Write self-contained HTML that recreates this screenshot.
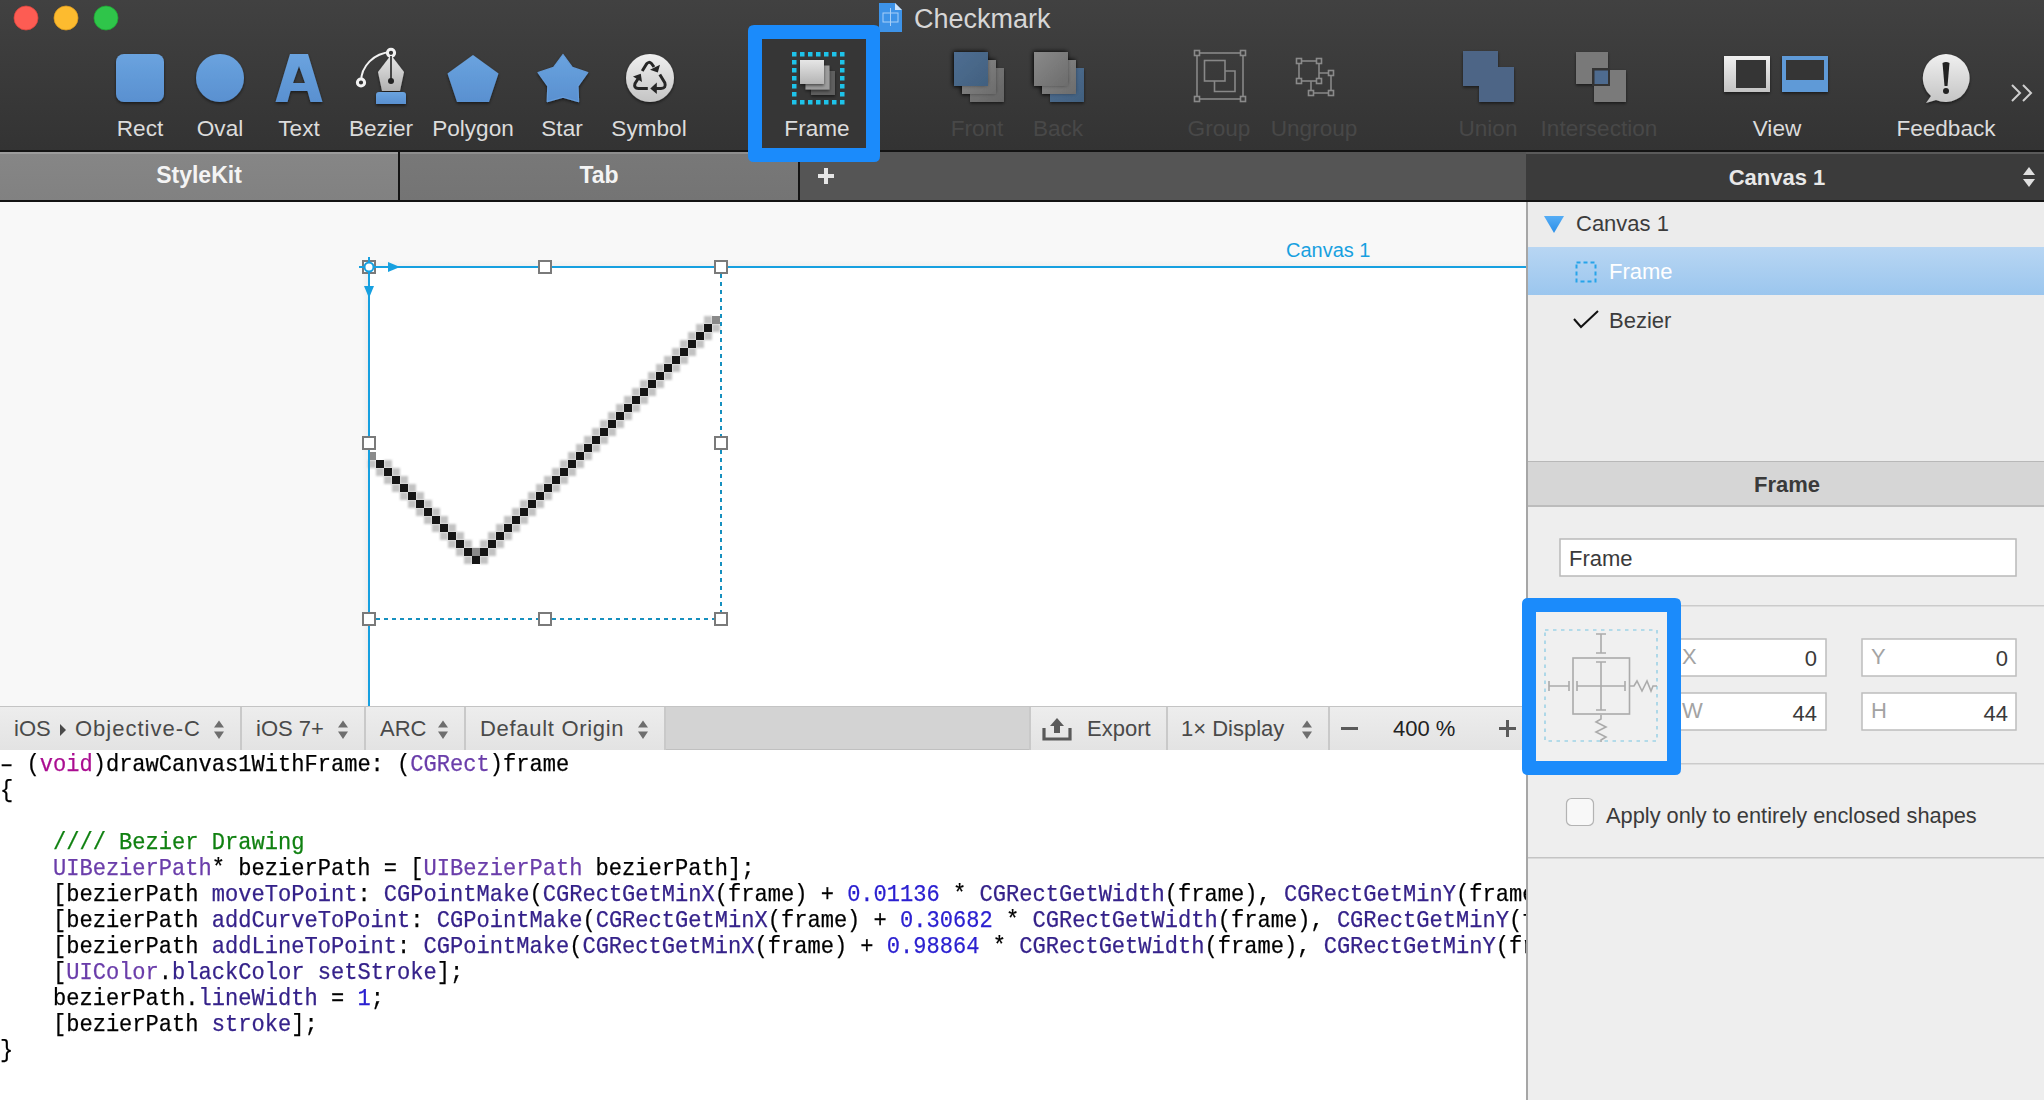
<!DOCTYPE html>
<html><head><meta charset="utf-8">
<style>
*{margin:0;padding:0;box-sizing:border-box}
html,body{width:2044px;height:1100px;overflow:hidden;background:#ececec;font-family:"Liberation Sans",sans-serif}
.a{position:absolute}
#toolbar{left:0;top:0;width:2044px;height:150px;background:linear-gradient(#414141,#333333)}
#sep1{left:0;top:150px;width:2044px;height:2px;background:#141414}
.lbl{position:absolute;top:115px;height:28px;font-size:22.6px;color:#dcdcdc;white-space:nowrap;text-align:center;line-height:28px}
.dis{color:#484848}
#tabs{left:0;top:152px;width:1526px;height:48px;background:#555}
#sep2{left:0;top:200px;width:2044px;height:2px;background:#141414}
.tab{position:absolute;top:0;height:48px;line-height:46px;text-align:center;color:#f4f4f4;font-weight:bold;font-size:23px}
#canvasArea{left:0;top:202px;width:1526px;height:504px;background:#f8f8f8;overflow:hidden}
#bottombar{left:0;top:706px;width:1526px;height:44px;background:#d3d3d3;border-top:1px solid #c4c4c4;border-bottom:1px solid #c0c0c0}
.seg{position:absolute;top:0;height:43px;background:linear-gradient(#ededed,#e3e3e3);border-right:2px solid #c9c9c9;color:#4a4a4a;font-size:22px;line-height:43px;white-space:nowrap}
#code{left:0;top:750px;width:1526px;height:350px;background:#fff;overflow:hidden}
.cl{position:absolute;left:0;height:26px;font-family:"Liberation Mono",monospace;font-size:24px;line-height:26px;white-space:pre;color:#000;transform-origin:0 0;transform:scaleX(0.919);-webkit-text-stroke:0.25px currentColor}
.kw{color:#aa0d91}.cls{color:#6a3daa}.mt{color:#35228a}.num{color:#2a1fd0}.cm{color:#0f8010}
#panel{left:1526px;top:202px;width:518px;height:898px;background:#eeeeee;border-left:2px solid #a6a6a6}
#phead{left:1526px;top:152px;width:518px;height:48px;background:#3b3b3b}
</style></head><body>

<div id="toolbar" class="a">
<svg class="a" style="left:0;top:0" width="2044" height="150">
<defs>
<linearGradient id="gb" x1="0" y1="0" x2="0" y2="1"><stop offset="0" stop-color="#6aa3df"/><stop offset="1" stop-color="#5990d0"/></linearGradient>
<linearGradient id="gw" x1="0" y1="0" x2="0" y2="1"><stop offset="0" stop-color="#f0f0f0"/><stop offset="1" stop-color="#c4c4c4"/></linearGradient>
<linearGradient id="gnib" x1="0" y1="0" x2="0" y2="1"><stop offset="0" stop-color="#e8e8e8"/><stop offset="1" stop-color="#b0b0b0"/></linearGradient>
<linearGradient id="gsq" x1="0" y1="0" x2="0" y2="1"><stop offset="0" stop-color="#e6e6e6"/><stop offset="1" stop-color="#b4b4b4"/></linearGradient>
<linearGradient id="gg" x1="0" y1="0" x2="1" y2="1"><stop offset="0" stop-color="#8a8a8a"/><stop offset="1" stop-color="#6c6c6c"/></linearGradient><linearGradient id="gg2" x1="0" y1="0" x2="1" y2="1"><stop offset="0" stop-color="#7e7e7e"/><stop offset="1" stop-color="#646464"/></linearGradient><linearGradient id="gbl" x1="0" y1="0" x2="1" y2="1"><stop offset="0" stop-color="#4f6e92"/><stop offset="1" stop-color="#41607f"/></linearGradient><filter id="sh2" x="-30%" y="-30%" width="160%" height="160%"><feDropShadow dx="-1" dy="-1" stdDeviation="2" flood-color="#000" flood-opacity="0.6"/></filter><filter id="sh" x="-20%" y="-20%" width="140%" height="150%"><feDropShadow dx="0" dy="1.5" stdDeviation="1.5" flood-color="#000" flood-opacity="0.55"/></filter>
</defs>
<!-- traffic lights -->
<circle cx="26" cy="18" r="12" fill="#fd5c53" stroke="#d9453d" stroke-width="0.8"/>
<circle cx="66" cy="18" r="12" fill="#fdbb2f" stroke="#dc9a20" stroke-width="0.8"/>
<circle cx="106" cy="18" r="12" fill="#2fc54a" stroke="#1fa634" stroke-width="0.8"/>
<!-- doc icon -->
<path d="M879,3 L895,3 L902,10 L902,32 L879,32 Z" fill="#3d93e8"/>
<path d="M895,3 L902,10 L895,10 Z" fill="#cfe4fa"/>
<rect x="883" y="13" width="15" height="9" fill="none" stroke="#a9d0f7" stroke-width="1"/>
<line x1="890.5" y1="8" x2="890.5" y2="26" stroke="#a9d0f7" stroke-width="1"/>
<!-- rect -->
<rect x="116" y="54" width="48" height="48" rx="8" fill="url(#gb)" filter="url(#sh)"/>
<!-- oval -->
<circle cx="220" cy="78" r="24" fill="url(#gb)" filter="url(#sh)"/>
<!-- A -->
<path fill-rule="evenodd" fill="url(#gb)" filter="url(#sh)" d="M290,54 L308,54 L322.5,102 L310.5,102 L307.5,91 L290.5,91 L287.5,102 L275.5,102 Z M299,66 L293,83 L305,83 Z"/>
<!-- bezier -->
<path d="M361,82 C361,66 374,53 391,52" fill="none" stroke="#f2f2f2" stroke-width="2"/>
<circle cx="361" cy="82.5" r="3.6" fill="#333" stroke="#f2f2f2" stroke-width="3"/>
<path d="M391,55 L404,72 L400,91 L382,91 L378,72 Z" fill="url(#gnib)" filter="url(#sh)"/>
<circle cx="391" cy="52.8" r="3.6" fill="#333" stroke="#f2f2f2" stroke-width="3"/>
<line x1="391" y1="56" x2="391" y2="80" stroke="#222" stroke-width="1.6"/>
<circle cx="391" cy="81" r="3" fill="#222"/>
<path d="M376,104 L376,95 Q376,92 379,92 L403,92 Q406,92 406,95 L406,104 Z" fill="url(#gb)" filter="url(#sh)"/>
<!-- polygon -->
<path d="M473,55 L498.5,73.5 L489,102 L457,102 L447.5,73.5 Z" fill="url(#gb)" filter="url(#sh)"/>
<!-- star -->
<path id="star" d="M563,54.5 L572.3,67.4 L587.8,72.5 L578,86.2 L578.6,101.7 L563,97.1 L547.2,101.7 L547.8,86.2 L538,72.5 L553.6,67.4 Z" fill="url(#gb)" stroke="#669ddb" stroke-width="1.2" stroke-linejoin="round" filter="url(#sh)"/>
<!-- symbol -->
<circle cx="650" cy="78" r="24" fill="url(#gw)" filter="url(#sh)"/>
<g fill="none" stroke="#262626" stroke-width="3" stroke-linejoin="round">
<path d="M642.2,71 L646.5,64 Q648.8,61 651.5,63.5 L654,67"/>
<path d="M638.2,78.5 L635,83.5 Q633.5,88.2 638.5,88.4 L647.8,88.4"/>
<path d="M659.8,74.5 L664.8,82.8 Q666.5,88.4 661,88.4 L654,88.4"/>
</g>
<g fill="#262626">
<path d="M650,69.8 L660,64.8 L657.8,72.5 Z"/>
<path d="M633,76.4 L640.8,73.8 L642,82 Z"/>
<path d="M650.3,88.4 L656.8,82.6 L656.8,94 Z"/>
</g>
<!-- frame highlight box -->

<rect x="762" y="39" width="104" height="109" fill="#363636"/>
<g id="framedots" fill="#1ec3e9"><rect x="792" y="52" width="4.5" height="4.5"/><rect x="792" y="100" width="4.5" height="4.5"/><rect x="800" y="52" width="4.5" height="4.5"/><rect x="800" y="100" width="4.5" height="4.5"/><rect x="808" y="52" width="4.5" height="4.5"/><rect x="808" y="100" width="4.5" height="4.5"/><rect x="816" y="52" width="4.5" height="4.5"/><rect x="816" y="100" width="4.5" height="4.5"/><rect x="824" y="52" width="4.5" height="4.5"/><rect x="824" y="100" width="4.5" height="4.5"/><rect x="832" y="52" width="4.5" height="4.5"/><rect x="832" y="100" width="4.5" height="4.5"/><rect x="840" y="52" width="4.5" height="4.5"/><rect x="840" y="100" width="4.5" height="4.5"/><rect x="792" y="60" width="4.5" height="4.5"/><rect x="840" y="60" width="4.5" height="4.5"/><rect x="792" y="68" width="4.5" height="4.5"/><rect x="840" y="68" width="4.5" height="4.5"/><rect x="792" y="76" width="4.5" height="4.5"/><rect x="840" y="76" width="4.5" height="4.5"/><rect x="792" y="84" width="4.5" height="4.5"/><rect x="840" y="84" width="4.5" height="4.5"/><rect x="792" y="92" width="4.5" height="4.5"/><rect x="840" y="92" width="4.5" height="4.5"/></g>
<rect x="811" y="71" width="24" height="24" fill="#5e5e5e" filter="url(#sh)"/>
<rect x="805.5" y="65.5" width="24" height="24" fill="#9c9c9c" filter="url(#sh)"/>
<rect x="800" y="60" width="24" height="24" fill="url(#gsq)" filter="url(#sh)"/>
<!-- front -->
<g filter="url(#sh)">
<rect x="970" y="68" width="34" height="34" fill="url(#gg2)"/>
<rect x="962" y="60" width="34" height="34" fill="url(#gg)" filter="url(#sh2)"/>
<rect x="954" y="52" width="34" height="34" fill="url(#gbl)" filter="url(#sh2)"/>
</g>
<!-- back -->
<g filter="url(#sh)">
<rect x="1050" y="68" width="34" height="34" fill="url(#gbl)"/>
<rect x="1042" y="60" width="34" height="34" fill="url(#gg)" filter="url(#sh2)"/>
<rect x="1034" y="52" width="34" height="34" fill="url(#gg)" filter="url(#sh2)"/>
</g>
<!-- group -->
<g fill="none" stroke="#888" stroke-width="1.6">
<rect x="1197" y="53" width="46" height="46"/>
<rect x="1204.5" y="60.5" width="20.5" height="20.5"/>
<path d="M1225,71 L1235,71 L1235,91.5 L1214.5,91.5 L1214.5,81"/>
</g>
<rect x="1194.5" y="50.5" width="5" height="5" fill="#3a3a3a" stroke="#8a8a8a" stroke-width="1.6"/><rect x="1240.5" y="50.5" width="5" height="5" fill="#3a3a3a" stroke="#8a8a8a" stroke-width="1.6"/><rect x="1194.5" y="96.5" width="5" height="5" fill="#3a3a3a" stroke="#8a8a8a" stroke-width="1.6"/><rect x="1240.5" y="96.5" width="5" height="5" fill="#3a3a3a" stroke="#8a8a8a" stroke-width="1.6"/>
<!-- ungroup -->
<g fill="none" stroke="#888" stroke-width="1.6">
<rect x="1299" y="61" width="20" height="20"/>
<path d="M1319,73 L1331,73 L1331,93 L1311,93 L1311,81"/>
</g>
<rect x="1296.5" y="58.5" width="5" height="5" fill="#3a3a3a" stroke="#8a8a8a" stroke-width="1.6"/><rect x="1316.5" y="58.5" width="5" height="5" fill="#3a3a3a" stroke="#8a8a8a" stroke-width="1.6"/><rect x="1296.5" y="78.5" width="5" height="5" fill="#3a3a3a" stroke="#8a8a8a" stroke-width="1.6"/><rect x="1316.5" y="78.5" width="5" height="5" fill="#3a3a3a" stroke="#8a8a8a" stroke-width="1.6"/><rect x="1328.5" y="70.5" width="5" height="5" fill="#3a3a3a" stroke="#8a8a8a" stroke-width="1.6"/><rect x="1308.5" y="90.5" width="5" height="5" fill="#3a3a3a" stroke="#8a8a8a" stroke-width="1.6"/><rect x="1328.5" y="90.5" width="5" height="5" fill="#3a3a3a" stroke="#8a8a8a" stroke-width="1.6"/>
<!-- union -->
<path d="M1463,51 L1498,51 L1498,67 L1514,67 L1514,102 L1479,102 L1479,86 L1463,86 Z" fill="#4d6586" filter="url(#sh)"/>
<!-- intersection -->
<g filter="url(#sh)">
<rect x="1576" y="52" width="32" height="32" fill="#797979"/>
<rect x="1594" y="70" width="32" height="32" fill="#7a7a7a"/>
</g>
<rect x="1592" y="68" width="18" height="18" fill="#333"/>
<rect x="1594.5" y="70.5" width="13.5" height="13.5" fill="#4e6b8f"/>
<!-- view -->
<path fill-rule="evenodd" fill="url(#gw)" filter="url(#sh)" d="M1724,56 L1770,56 L1770,92 L1724,92 Z M1736,60 L1736,88 L1766,88 L1766,60 Z"/>
<rect x="1736" y="60" width="30" height="28" fill="#353535"/>
<path fill-rule="evenodd" fill="#5e9ad7" filter="url(#sh)" d="M1782,56 L1828,56 L1828,92 L1782,92 Z M1786,60 L1786,80 L1824,80 L1824,60 Z"/>
<rect x="1786" y="60" width="38" height="20" fill="#353535"/>
<!-- feedback -->
<path d="M1946,54 A24,24 0 1 1 1936,100 L1926,103 L1931,96 A24,24 0 0 1 1946,54 Z" fill="url(#gw)" filter="url(#sh)"/>
<path d="M1942.5,63 Q1946,61 1949.5,63 L1947.5,86 L1944.5,86 Z" fill="#222"/>
<circle cx="1946" cy="91" r="3" fill="#222"/>
<!-- chevrons -->
<path d="M2012,85 L2020,93 L2012,101 M2023,85 L2031,93 L2023,101" fill="none" stroke="#cfcfcf" stroke-width="2"/>
</svg>
<div class="lbl" style="left:90px;width:100px">Rect</div>
<div class="lbl" style="left:170px;width:100px">Oval</div>
<div class="lbl" style="left:249px;width:100px">Text</div>
<div class="lbl" style="left:331px;width:100px">Bezier</div>
<div class="lbl" style="left:413px;width:120px">Polygon</div>
<div class="lbl" style="left:512px;width:100px">Star</div>
<div class="lbl" style="left:599px;width:100px">Symbol</div>
<div class="lbl" style="left:767px;width:100px">Frame</div>
<div class="lbl dis" style="left:927px;width:100px">Front</div>
<div class="lbl dis" style="left:1008px;width:100px">Back</div>
<div class="lbl dis" style="left:1169px;width:100px">Group</div>
<div class="lbl dis" style="left:1254px;width:120px">Ungroup</div>
<div class="lbl dis" style="left:1438px;width:100px">Union</div>
<div class="lbl dis" style="left:1519px;width:160px">Intersection</div>
<div class="lbl" style="left:1727px;width:100px">View</div>
<div class="lbl" style="left:1886px;width:120px">Feedback</div>
<div class="a" style="left:914px;top:2px;font-size:27px;line-height:34px;color:#d6d6d6">Checkmark</div>
</div>

<div id="sep1" class="a"></div>
<div id="tabs" class="a">
<div class="tab" style="left:0;width:398px;background:linear-gradient(#9c9c9c 0,#9c9c9c 1.5px,#868686 2.5px,#818181)">StyleKit</div>
<div class="a" style="left:398px;top:0;width:2px;height:48px;background:#141414"></div>
<div class="tab" style="left:400px;width:398px;background:linear-gradient(#8e8e8e 0,#8e8e8e 1.5px,#787878 2.5px,#747474)">Tab</div>
<div class="a" style="left:798px;top:0;width:2px;height:48px;background:#141414"></div>
<div class="a" style="left:818px;top:22px;width:16px;height:4px;background:#e6e6e6"></div>
<div class="a" style="left:824px;top:16px;width:4px;height:16px;background:#e6e6e6"></div>
</div>
<div id="sep2" class="a"></div>
<div id="phead" class="a">
<div class="a" style="left:0;top:0;width:518px;height:2px;background:#5a5a5a"></div>
<div class="a" style="left:-8px;top:1px;width:518px;height:48px;line-height:50px;text-align:center;color:#e8e8e8;font-weight:bold;font-size:22px">Canvas 1</div>
<svg class="a" style="left:495px;top:14px" width="16" height="22"><path d="M8,1 L14,9 L2,9 Z M8,21 L14,13 L2,13 Z" fill="#e0e0e0"/></svg>
</div>
<div id="canvasArea" class="a">
<svg class="a" style="left:0;top:-202px" width="1526" height="908">
<defs><linearGradient id="shl" x1="0" y1="0" x2="1" y2="0"><stop offset="0" stop-color="#f8f8f8"/><stop offset="1" stop-color="#ededed"/></linearGradient>
<linearGradient id="sht" x1="0" y1="0" x2="0" y2="1"><stop offset="0" stop-color="#f8f8f8"/><stop offset="1" stop-color="#f0f0f0"/></linearGradient></defs>
<rect x="362" y="267" width="7" height="440" fill="url(#shl)"/>
<rect x="369" y="260" width="1160" height="7" fill="url(#sht)"/>
<rect x="369" y="267" width="1160" height="440" fill="#fff"/>
<filter id="blr" x="-5%" y="-5%" width="110%" height="110%"><feGaussianBlur stdDeviation="1.3"/></filter><g fill="#c2c2c2" filter="url(#blr)"><rect x="368" y="460" width="8" height="8"/><rect x="384" y="460" width="8" height="8"/><rect x="376" y="468" width="8" height="8"/><rect x="392" y="468" width="8" height="8"/><rect x="384" y="476" width="8" height="8"/><rect x="400" y="476" width="8" height="8"/><rect x="392" y="484" width="8" height="8"/><rect x="408" y="484" width="8" height="8"/><rect x="400" y="492" width="8" height="8"/><rect x="416" y="492" width="8" height="8"/><rect x="408" y="500" width="8" height="8"/><rect x="424" y="500" width="8" height="8"/><rect x="416" y="508" width="8" height="8"/><rect x="432" y="508" width="8" height="8"/><rect x="424" y="516" width="8" height="8"/><rect x="440" y="516" width="8" height="8"/><rect x="432" y="524" width="8" height="8"/><rect x="448" y="524" width="8" height="8"/><rect x="440" y="532" width="8" height="8"/><rect x="456" y="532" width="8" height="8"/><rect x="448" y="540" width="8" height="8"/><rect x="464" y="540" width="8" height="8"/><rect x="456" y="548" width="8" height="8"/><rect x="472" y="548" width="8" height="8"/><rect x="464" y="556" width="8" height="8"/><rect x="480" y="556" width="8" height="8"/><rect x="488" y="548" width="8" height="8"/><rect x="480" y="540" width="8" height="8"/><rect x="496" y="540" width="8" height="8"/><rect x="488" y="532" width="8" height="8"/><rect x="504" y="532" width="8" height="8"/><rect x="496" y="524" width="8" height="8"/><rect x="512" y="524" width="8" height="8"/><rect x="504" y="516" width="8" height="8"/><rect x="520" y="516" width="8" height="8"/><rect x="512" y="508" width="8" height="8"/><rect x="528" y="508" width="8" height="8"/><rect x="520" y="500" width="8" height="8"/><rect x="536" y="500" width="8" height="8"/><rect x="528" y="492" width="8" height="8"/><rect x="544" y="492" width="8" height="8"/><rect x="536" y="484" width="8" height="8"/><rect x="552" y="484" width="8" height="8"/><rect x="544" y="476" width="8" height="8"/><rect x="560" y="476" width="8" height="8"/><rect x="552" y="468" width="8" height="8"/><rect x="568" y="468" width="8" height="8"/><rect x="560" y="460" width="8" height="8"/><rect x="576" y="460" width="8" height="8"/><rect x="568" y="452" width="8" height="8"/><rect x="584" y="452" width="8" height="8"/><rect x="576" y="444" width="8" height="8"/><rect x="592" y="444" width="8" height="8"/><rect x="584" y="436" width="8" height="8"/><rect x="600" y="436" width="8" height="8"/><rect x="592" y="428" width="8" height="8"/><rect x="608" y="428" width="8" height="8"/><rect x="600" y="420" width="8" height="8"/><rect x="616" y="420" width="8" height="8"/><rect x="608" y="412" width="8" height="8"/><rect x="624" y="412" width="8" height="8"/><rect x="616" y="404" width="8" height="8"/><rect x="632" y="404" width="8" height="8"/><rect x="624" y="396" width="8" height="8"/><rect x="640" y="396" width="8" height="8"/><rect x="632" y="388" width="8" height="8"/><rect x="648" y="388" width="8" height="8"/><rect x="640" y="380" width="8" height="8"/><rect x="656" y="380" width="8" height="8"/><rect x="648" y="372" width="8" height="8"/><rect x="664" y="372" width="8" height="8"/><rect x="656" y="364" width="8" height="8"/><rect x="672" y="364" width="8" height="8"/><rect x="664" y="356" width="8" height="8"/><rect x="680" y="356" width="8" height="8"/><rect x="672" y="348" width="8" height="8"/><rect x="688" y="348" width="8" height="8"/><rect x="680" y="340" width="8" height="8"/><rect x="696" y="340" width="8" height="8"/><rect x="688" y="332" width="8" height="8"/><rect x="704" y="332" width="8" height="8"/><rect x="696" y="324" width="8" height="8"/><rect x="712" y="324" width="8" height="8"/><rect x="704" y="316" width="8" height="8"/></g>
<rect x="368" y="452" width="8" height="8" fill="#8a8a8a"/>
<rect x="472" y="548" width="8" height="8" fill="#8a8a8a"/>
<rect x="712" y="316" width="8" height="8" fill="#8a8a8a"/>
<g fill="#151515"><rect x="376" y="460" width="8" height="8"/><rect x="384" y="468" width="8" height="8"/><rect x="392" y="476" width="8" height="8"/><rect x="400" y="484" width="8" height="8"/><rect x="408" y="492" width="8" height="8"/><rect x="416" y="500" width="8" height="8"/><rect x="424" y="508" width="8" height="8"/><rect x="432" y="516" width="8" height="8"/><rect x="440" y="524" width="8" height="8"/><rect x="448" y="532" width="8" height="8"/><rect x="456" y="540" width="8" height="8"/><rect x="464" y="548" width="8" height="8"/><rect x="472" y="556" width="8" height="8"/><rect x="480" y="548" width="8" height="8"/><rect x="488" y="540" width="8" height="8"/><rect x="496" y="532" width="8" height="8"/><rect x="504" y="524" width="8" height="8"/><rect x="512" y="516" width="8" height="8"/><rect x="520" y="508" width="8" height="8"/><rect x="528" y="500" width="8" height="8"/><rect x="536" y="492" width="8" height="8"/><rect x="544" y="484" width="8" height="8"/><rect x="552" y="476" width="8" height="8"/><rect x="560" y="468" width="8" height="8"/><rect x="568" y="460" width="8" height="8"/><rect x="576" y="452" width="8" height="8"/><rect x="584" y="444" width="8" height="8"/><rect x="592" y="436" width="8" height="8"/><rect x="600" y="428" width="8" height="8"/><rect x="608" y="420" width="8" height="8"/><rect x="616" y="412" width="8" height="8"/><rect x="624" y="404" width="8" height="8"/><rect x="632" y="396" width="8" height="8"/><rect x="640" y="388" width="8" height="8"/><rect x="648" y="380" width="8" height="8"/><rect x="656" y="372" width="8" height="8"/><rect x="664" y="364" width="8" height="8"/><rect x="672" y="356" width="8" height="8"/><rect x="680" y="348" width="8" height="8"/><rect x="688" y="340" width="8" height="8"/><rect x="696" y="332" width="8" height="8"/><rect x="704" y="324" width="8" height="8"/></g>
<rect x="368" y="266" width="1160" height="2" fill="#17a0e0"/>
<rect x="368" y="266" width="2" height="441" fill="#17a0e0"/>
<line x1="721" y1="274" x2="721" y2="612" stroke="#1690bf" stroke-width="2" stroke-dasharray="4 4"/>
<line x1="376" y1="619" x2="714" y2="619" stroke="#1690bf" stroke-width="2" stroke-dasharray="4 4" stroke-dashoffset="-0"/>
<rect x="363" y="261" width="12" height="12" fill="#fff" stroke="#7a7a7a" stroke-width="2"/><rect x="539" y="261" width="12" height="12" fill="#fff" stroke="#7a7a7a" stroke-width="2"/><rect x="715" y="261" width="12" height="12" fill="#fff" stroke="#7a7a7a" stroke-width="2"/><rect x="363" y="437" width="12" height="12" fill="#fff" stroke="#7a7a7a" stroke-width="2"/><rect x="715" y="437" width="12" height="12" fill="#fff" stroke="#7a7a7a" stroke-width="2"/><rect x="363" y="613" width="12" height="12" fill="#fff" stroke="#7a7a7a" stroke-width="2"/><rect x="539" y="613" width="12" height="12" fill="#fff" stroke="#7a7a7a" stroke-width="2"/><rect x="715" y="613" width="12" height="12" fill="#fff" stroke="#7a7a7a" stroke-width="2"/>
<line x1="359" y1="267" x2="380" y2="267" stroke="#17a0e0" stroke-width="2"/>
<line x1="369" y1="257" x2="369" y2="278" stroke="#17a0e0" stroke-width="2"/>
<circle cx="369" cy="267" r="4.5" fill="#fff" stroke="#17a0e0" stroke-width="2"/>
<path d="M388,262 L400,267 L388,272 Z" fill="#17a0e0"/>
<path d="M364,286 L374,286 L369,298 Z" fill="#17a0e0"/>
</svg>
<div class="a" style="left:1286px;top:36px;font-size:20px;line-height:24px;color:#17a0e0">Canvas 1</div>
</div>
<div id="bottombar" class="a">
<div class="seg" style="left:0;width:242px"><span class="a" style="left:14px;top:0">iOS</span><svg class="a" style="left:58px;top:16px" width="10" height="14"><path d="M2,1 L8,7 L2,13 Z" fill="#4a4a4a"/></svg><span class="a" style="left:75px;top:0;letter-spacing:1px">Objective-C</span><svg class="a" style="left:213px;top:13px" width="12" height="20"><path d="M6,0.5 L11,7.5 L1,7.5 Z M6,19 L11,11.5 L1,11.5 Z" fill="#6e6e6e"/></svg></div>
<div class="seg" style="left:242px;width:124px"><span class="a" style="left:14px;top:0">iOS 7+</span><svg class="a" style="left:95px;top:13px" width="12" height="20"><path d="M6,0.5 L11,7.5 L1,7.5 Z M6,19 L11,11.5 L1,11.5 Z" fill="#6e6e6e"/></svg></div>
<div class="seg" style="left:366px;width:100px"><span class="a" style="left:14px;top:0">ARC</span><svg class="a" style="left:71px;top:13px" width="12" height="20"><path d="M6,0.5 L11,7.5 L1,7.5 Z M6,19 L11,11.5 L1,11.5 Z" fill="#6e6e6e"/></svg></div>
<div class="seg" style="left:466px;width:200px"><span class="a" style="left:14px;top:0;letter-spacing:0.7px">Default Origin</span><svg class="a" style="left:171px;top:13px" width="12" height="20"><path d="M6,0.5 L11,7.5 L1,7.5 Z M6,19 L11,11.5 L1,11.5 Z" fill="#6e6e6e"/></svg></div>
<div class="seg" style="left:1029px;width:139px;border-left:2px solid #c9c9c9"><svg class="a" style="left:11px;top:9px" width="34" height="26"><path d="M15,2 L22,10 L18,10 L18,17 L12,17 L12,10 L8,10 Z" fill="#5a5a5a"/><path d="M2,12 L2,23 L28,23 L28,12" fill="none" stroke="#5a5a5a" stroke-width="3.2"/></svg><span class="a" style="left:56px;top:0">Export</span></div>
<div class="seg" style="left:1168px;width:162px"><span class="a" style="left:13px;top:0">1× Display</span><svg class="a" style="left:133px;top:13px" width="12" height="20"><path d="M6,0.5 L11,7.5 L1,7.5 Z M6,19 L11,11.5 L1,11.5 Z" fill="#6e6e6e"/></svg></div>
<div class="seg" style="left:1330px;width:196px;border-right:none"><div class="a" style="left:11px;top:20px;width:17px;height:3px;background:#5a5a5a"></div><span class="a" style="left:63px;top:0;color:#222">400 %</span><div class="a" style="left:169px;top:20px;width:17px;height:3px;background:#5a5a5a"></div><div class="a" style="left:176px;top:13px;width:3px;height:17px;background:#5a5a5a"></div></div>
</div>
<div id="code" class="a"><div class="cl" style="top:2px">– (<span class="kw">void</span>)drawCanvas1WithFrame: (<span class="cls">CGRect</span>)frame</div>
<div class="cl" style="top:28px">{</div>
<div class="cl" style="top:80px"><span class="cm">    //// Bezier Drawing</span></div>
<div class="cl" style="top:106px">    <span class="cls">UIBezierPath</span>* bezierPath = [<span class="cls">UIBezierPath</span> bezierPath];</div>
<div class="cl" style="top:132px">    [bezierPath <span class="mt">moveToPoint</span>: <span class="mt">CGPointMake</span>(<span class="mt">CGRectGetMinX</span>(frame) + <span class="num">0.01136</span> * <span class="mt">CGRectGetWidth</span>(frame), <span class="mt">CGRectGetMinY</span>(frame) + <span class="num">0.54545</span> * <span class="mt">CGRectGetHeight</span>(frame))];</div>
<div class="cl" style="top:158px">    [bezierPath <span class="mt">addCurveToPoint</span>: <span class="mt">CGPointMake</span>(<span class="mt">CGRectGetMinX</span>(frame) + <span class="num">0.30682</span> * <span class="mt">CGRectGetWidth</span>(frame), <span class="mt">CGRectGetMinY</span>(frame) + <span class="num">0.84091</span> * <span class="mt">CGRectGetHeight</span>(frame))];</div>
<div class="cl" style="top:184px">    [bezierPath <span class="mt">addLineToPoint</span>: <span class="mt">CGPointMake</span>(<span class="mt">CGRectGetMinX</span>(frame) + <span class="num">0.98864</span> * <span class="mt">CGRectGetWidth</span>(frame), <span class="mt">CGRectGetMinY</span>(frame) + <span class="num">0.15909</span> * <span class="mt">CGRectGetHeight</span>(frame))];</div>
<div class="cl" style="top:210px">    [<span class="cls">UIColor</span>.<span class="mt">blackColor</span> <span class="mt">setStroke</span>];</div>
<div class="cl" style="top:236px">    bezierPath.<span class="mt">lineWidth</span> = <span class="num">1</span>;</div>
<div class="cl" style="top:262px">    [bezierPath <span class="mt">stroke</span>];</div>
<div class="cl" style="top:288px">}</div></div>
<div id="panel" class="a">
<svg class="a" style="left:-2px;top:-202px" width="520" height="1100">
<defs>
<linearGradient id="tri" x1="0" y1="0" x2="0" y2="1"><stop offset="0" stop-color="#56adf5"/><stop offset="1" stop-color="#2a8fe8"/></linearGradient>
<linearGradient id="sel" x1="0" y1="0" x2="0" y2="1"><stop offset="0" stop-color="#b8d6f3"/><stop offset="1" stop-color="#9bc6ee"/></linearGradient>
</defs>
<g transform="translate(-1526,0)">
<rect x="1528" y="202" width="520" height="259" fill="#ececec"/>
<path d="M1544,216 L1564,216 L1554,233 Z" fill="url(#tri)"/>
<rect x="1528" y="247" width="520" height="48" fill="url(#sel)"/>
<rect x="1576.5" y="262.5" width="19" height="19" fill="none" stroke="#26a4ea" stroke-width="2" stroke-dasharray="4 3"/>
<path d="M1574,319 L1581,327 L1598,311" fill="none" stroke="#111" stroke-width="2"/>
<rect x="1528" y="461" width="520" height="2" fill="#b8b8b8"/>
<rect x="1528" y="462" width="520" height="43" fill="#d6d6d6"/>
<rect x="1528" y="505" width="520" height="2" fill="#bcbcbc"/>
<rect x="1560" y="539" width="456" height="37" fill="#fff" stroke="#b9b9b9" stroke-width="1.5"/>
<rect x="1528" y="605" width="520" height="1.5" fill="#cbcbcb"/>
<rect x="1674" y="639" width="152" height="37" fill="#fff" stroke="#bdbdbd" stroke-width="1.5"/>
<rect x="1862" y="639" width="154" height="37" fill="#fff" stroke="#bdbdbd" stroke-width="1.5"/>
<rect x="1674" y="693" width="152" height="37" fill="#fff" stroke="#bdbdbd" stroke-width="1.5"/>
<rect x="1862" y="693" width="154" height="37" fill="#fff" stroke="#bdbdbd" stroke-width="1.5"/>
<rect x="1528" y="763" width="520" height="1.5" fill="#cbcbcb"/>
<rect x="1566.5" y="798.5" width="27" height="27" rx="5" fill="#f8f8f8" stroke="#b3b3b3" stroke-width="1.2"/>
<rect x="1528" y="857" width="520" height="1.5" fill="#c4c4c4"/>
<!-- blue box -->

<rect x="1536" y="612" width="131" height="149" fill="#f0f0f0"/>
<rect x="1545" y="630" width="112" height="111" fill="none" stroke="#9fd3e6" stroke-width="1.6" stroke-dasharray="3.5 4.5"/>
<g fill="none" stroke="#ababab" stroke-width="1.6">
<rect x="1573" y="658" width="56.5" height="56"/>
<path d="M1601,634 L1601,653 M1596,634 L1606,634 M1596,653 L1606,653"/>
<path d="M1601,662 L1601,710 M1596,662 L1606,662 M1596,710 L1606,710"/>
<path d="M1577,686 L1625,686 M1577,681 L1577,691 M1625,681 L1625,691"/>
<path d="M1549,686 L1569,686 M1549,681 L1549,691 M1569,681 L1569,691"/>
<path d="M1630,686 L1634,686 L1637,681 L1642,691 L1647,681 L1651,691 L1653,686 L1657,686"/>
<path d="M1601,715 L1601,719 L1596,722 L1606,727 L1596,732 L1606,737 L1601,740 L1601,742"/>
</g>
</g>
</svg>
<div class="a" style="left:48px;top:8px;font-size:22px;line-height:28px;color:#3c3c3c">Canvas 1</div>
<div class="a" style="left:81px;top:56px;font-size:22px;line-height:28px;color:#fff">Frame</div>
<div class="a" style="left:81px;top:105px;font-size:22px;line-height:28px;color:#3c3c3c">Bezier</div>
<div class="a" style="left:0;top:269px;width:518px;text-align:center;font-weight:bold;font-size:22px;line-height:28px;color:#3a3a3a">Frame</div>
<div class="a" style="left:41px;top:343px;font-size:22px;line-height:28px;color:#3a3a3a">Frame</div>
<div class="a" style="left:154px;top:441px;font-size:22px;line-height:28px;color:#a3a3a3">X</div>
<div class="a" style="left:343px;top:441px;font-size:22px;line-height:28px;color:#a3a3a3">Y</div>
<div class="a" style="left:154px;top:495px;font-size:22px;line-height:28px;color:#a3a3a3">W</div>
<div class="a" style="left:343px;top:495px;font-size:22px;line-height:28px;color:#a3a3a3">H</div>
<div class="a" style="left:197px;top:443px;width:92px;text-align:right;font-size:22px;line-height:28px;color:#3a3a3a">0</div>
<div class="a" style="left:388px;top:443px;width:92px;text-align:right;font-size:22px;line-height:28px;color:#3a3a3a">0</div>
<div class="a" style="left:197px;top:498px;width:92px;text-align:right;font-size:22px;line-height:28px;color:#3a3a3a">44</div>
<div class="a" style="left:388px;top:498px;width:92px;text-align:right;font-size:22px;line-height:28px;color:#3a3a3a">44</div>
<div class="a" style="left:78px;top:599.5px;font-size:21.8px;line-height:28px;color:#3a3a3a">Apply only to entirely enclosed shapes</div>
</div>
<svg class="a" style="left:0;top:0;z-index:10" width="2044" height="1100">
<path fill-rule="evenodd" fill="#1b8bfb" d="M754,25 L874,25 Q880,25 880,31 L880,156 Q880,162 874,162 L754,162 Q748,162 748,156 L748,31 Q748,25 754,25 Z M762,39 L762,148 L866,148 L866,39 Z"/>
<path fill-rule="evenodd" fill="#1b8bfb" d="M1528,598 L1675,598 Q1681,598 1681,604 L1681,769 Q1681,775 1675,775 L1528,775 Q1522,775 1522,769 L1522,604 Q1522,598 1528,598 Z M1536,612 L1536,761 L1667,761 L1667,612 Z"/>
</svg>
</body></html>
